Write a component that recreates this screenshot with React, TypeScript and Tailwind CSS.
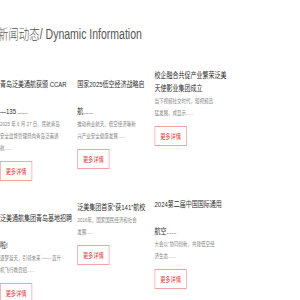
type Item = { title: string[]; tight?: boolean; desc: string[]; top: string; bottom: string };

const news: Item[][] = [
  [
    {
      title: ["青岛泛美通航获颁 CCAR", "—135 ......"],
      desc: ["2025 年 6 月 27 日，民航青岛", "安全监督管理局向青岛泛美通", "航......"],
      top: "pt-[9px]",
      bottom: "mb-[31px]",
    },
    {
      title: ["泛美通航集团青岛基地招聘", "啦!"],
      desc: ["逐梦蓝天，引领未来 —— 直升", "机飞行教员招......"],
      top: "pt-0",
      bottom: "mb-0",
    },
  ],
  [
    {
      title: ["国家2025低空经济战略启", "航......"],
      desc: ["推动商业航天、低空经济等新", "兴产业安全健康发展......"],
      top: "pt-[9px]",
      bottom: "mb-[32px]",
    },
    {
      title: ["泛美集团首家“获141”航校"],
      desc: ["2016年，国家国民经济和社会", "发展......"],
      top: "pt-0",
      bottom: "mb-0",
    },
  ],
  [
    {
      title: ["校企融合共促产业繁荣泛美", "天使影业集团成立"],
      tight: true,
      desc: ["当下视频社交时代，短视频迅", "猛发展，成显示......"],
      top: "pt-0",
      bottom: "mb-[52px]",
    },
    {
      title: ["2024第二届中国国际通用", "航空......"],
      desc: ["大会以“协同创新，共建低空经", "济生态......"],
      top: "pt-0",
      bottom: "mb-0",
    },
  ],
];

function NewsCard({ item }: { item: Item }) {
  return (
    <div className={`flex flex-col items-start ${item.top} ${item.bottom}`}>
      <div
        className={`flex flex-col text-[8px] leading-[13px] text-[#2b2b2b] ${
          item.tight ? "gap-0" : "gap-[14px]"
        }`}
      >
        {item.title.map((t) => (
          <div key={t} className="whitespace-nowrap">{t}</div>
        ))}
      </div>
      <div className="text-[6px] leading-[12px] text-[#8a8a8a]">
        {item.desc.map((d) => (
          <div key={d} className="whitespace-nowrap">{d}</div>
        ))}
      </div>
      <button className="mt-[7px] flex h-[20px] w-[43px] items-center justify-center border border-[#f2a3a3] bg-white text-[7px] leading-none text-[#e4393c]">
        更多详情
      </button>
    </div>
  );
}

export default function App() {
  return (
    <div className="h-[300px] w-[300px] overflow-hidden bg-white">
      <div className="w-[400px] origin-top-left scale-x-75 font-['Liberation_Sans','Noto_Sans_CJK_SC',sans-serif]">
        <h2 className="-ml-[3px] pt-[26px] text-[14px] leading-[16px] font-light text-[#555]">
          新闻动态/ Dynamic Information
        </h2>
        <div className="mt-[27px] grid grid-cols-[93px_93px_93px] items-start gap-x-[10px]">
          {news.map((col, i) => (
            <div key={i} className="flex flex-col">
              {col.map((item) => (
                <NewsCard key={item.title[0]} item={item} />
              ))}
            </div>
          ))}
        </div>
      </div>
    </div>
  );
}
